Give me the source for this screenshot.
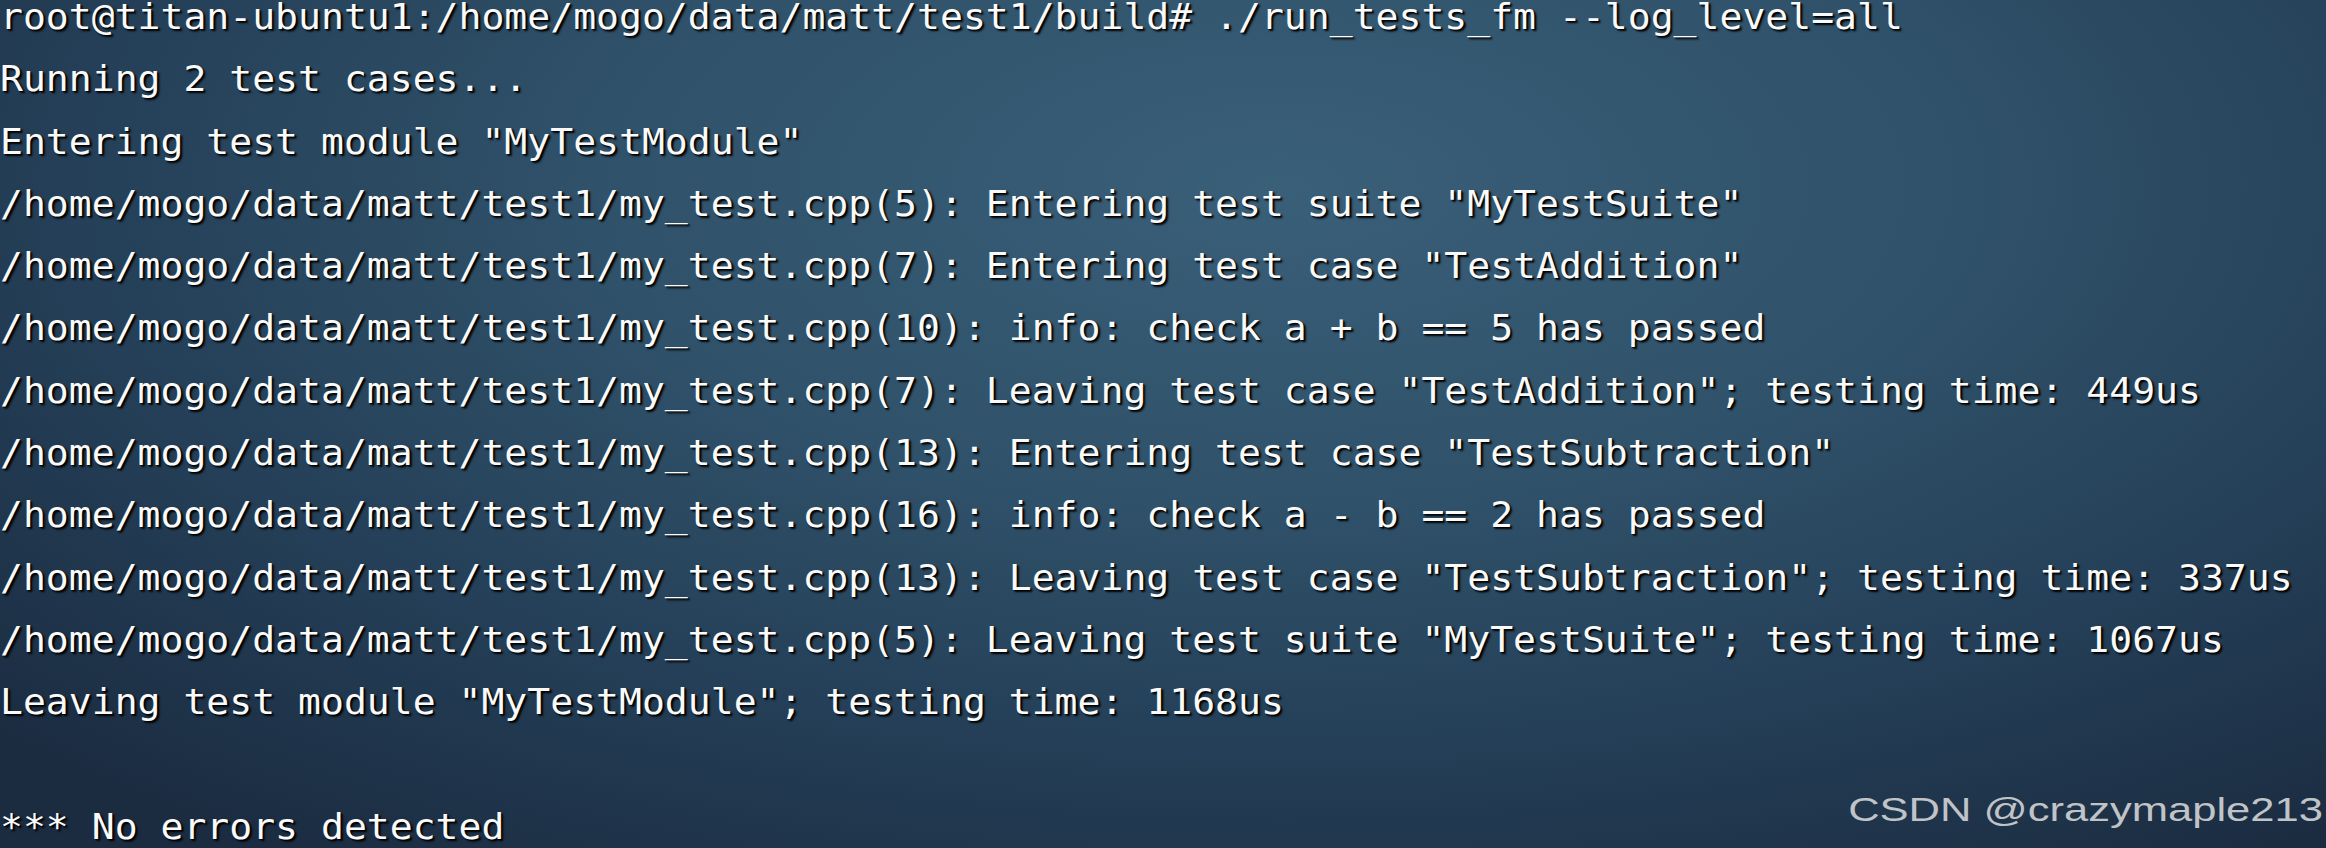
const lines = [
  "root@titan-ubuntu1:/home/mogo/data/matt/test1/build# ./run_tests_fm --log_level=all",
  "Running 2 test cases...",
  'Entering test module "MyTestModule"',
  '/home/mogo/data/matt/test1/my_test.cpp(5): Entering test suite "MyTestSuite"',
  '/home/mogo/data/matt/test1/my_test.cpp(7): Entering test case "TestAddition"',
  "/home/mogo/data/matt/test1/my_test.cpp(10): info: check a + b == 5 has passed",
  '/home/mogo/data/matt/test1/my_test.cpp(7): Leaving test case "TestAddition"; testing time: 449us',
  '/home/mogo/data/matt/test1/my_test.cpp(13): Entering test case "TestSubtraction"',
  "/home/mogo/data/matt/test1/my_test.cpp(16): info: check a - b == 2 has passed",
  '/home/mogo/data/matt/test1/my_test.cpp(13): Leaving test case "TestSubtraction"; testing time: 337us',
  '/home/mogo/data/matt/test1/my_test.cpp(5): Leaving test suite "MyTestSuite"; testing time: 1067us',
  'Leaving test module "MyTestModule"; testing time: 1168us',
  "",
  "*** No errors detected",
];

export default function App() {
  return (
    <div className="relative w-[2326px] h-[848px] overflow-hidden bg-[radial-gradient(ellipse_75%_95%_at_55%_22%,#3a5f79_0%,#2f5169_40%,#243f57_70%,#1b2c41_100%)]">
      {/* terminal output */}
      <div className="-mt-[14px] origin-left scale-x-[1.088] font-['DejaVu_Sans_Mono',monospace] text-[35px] leading-[62.3px] text-[#fafafa] whitespace-pre [text-shadow:2px_2px_2px_rgba(0,0,0,0.95),1px_1px_1px_rgba(0,0,0,0.8)]">
        {lines.map((line, i) => (
          <div key={i}>{line || "\u00a0"}</div>
        ))}
      </div>

      {/* watermark */}
      <div className="absolute right-[3px] bottom-[22px] origin-right scale-x-[1.28] font-['Liberation_Sans',Arial,sans-serif] text-[34px] leading-none text-[#c0c4c8]">
        CSDN @crazymaple213
      </div>
    </div>
  );
}
